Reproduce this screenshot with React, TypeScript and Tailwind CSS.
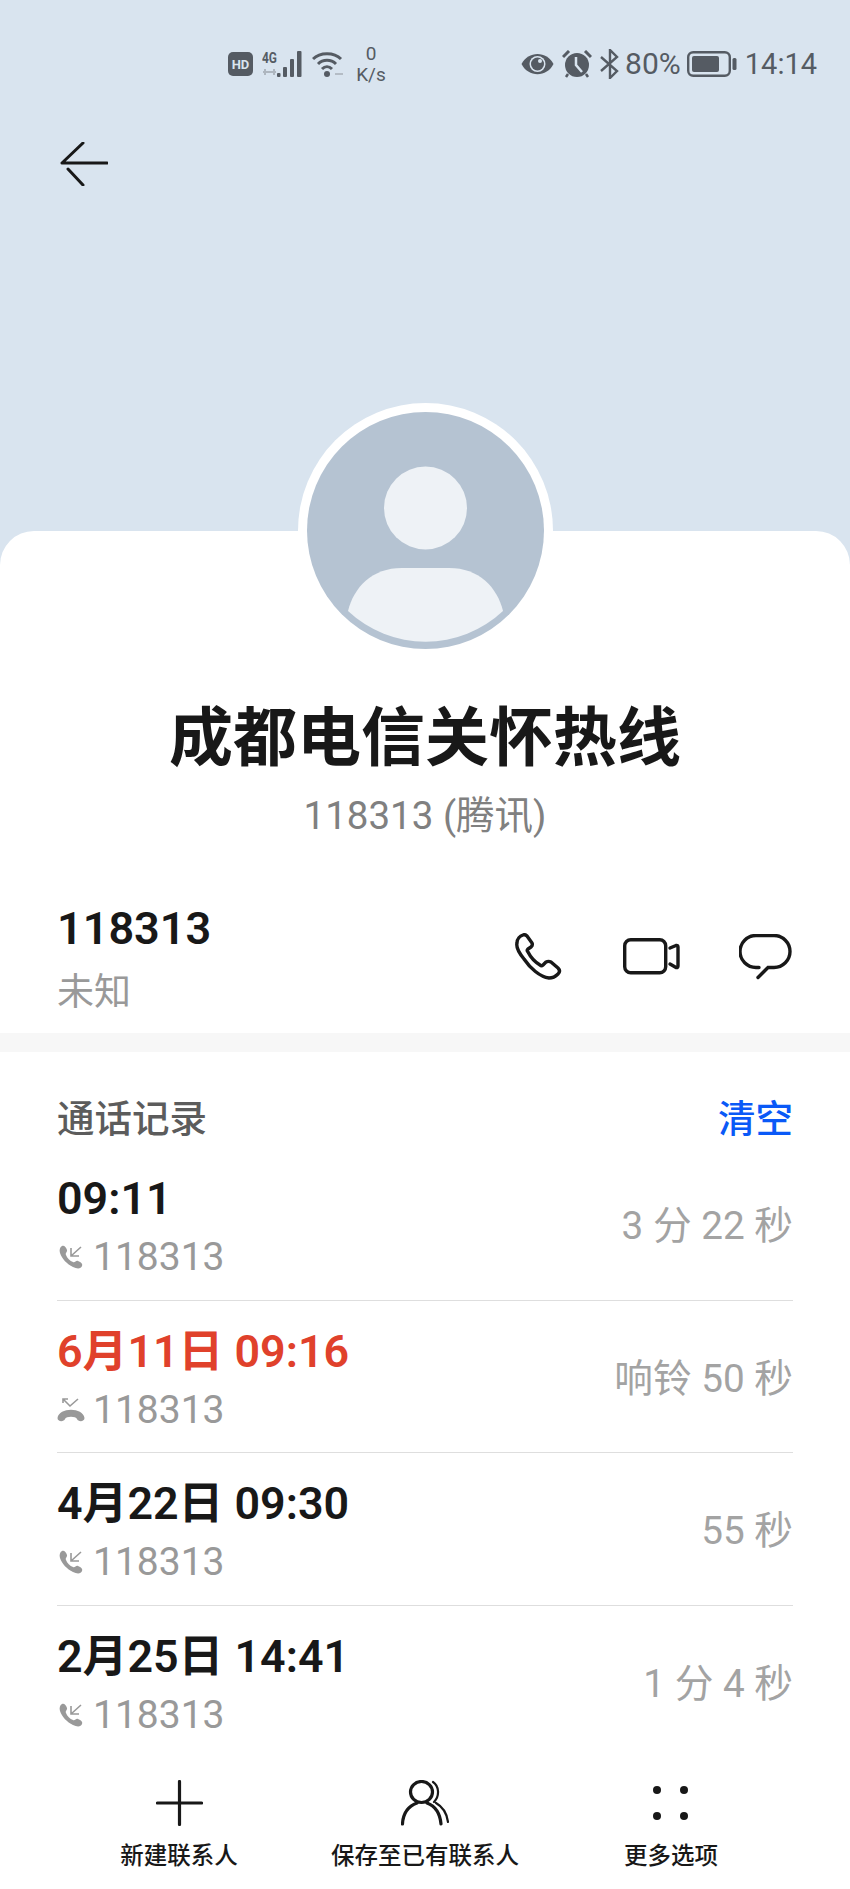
const calls = [
  { time: '09:11', duration: '3 分 22 秒', missed: false },
  { time: '6月11日 09:16', duration: '响铃 50 秒', missed: true },
  { time: '4月22日 09:30', duration: '55 秒', missed: false },
  { time: '2月25日 14:41', duration: '1 分 4 秒', missed: false },
];

function BackIcon() {
  return (
    <svg width="48" height="44" viewBox="0 0 48 44" fill="none" stroke="#181818" strokeWidth="3" strokeLinecap="round">
      <path d="M2 21H47M2 21L23 1M8 27L23 43" />
    </svg>
  );
}

function StatusLeft() {
  return (
    <div className="flex items-center">
      <div className="flex h-[24px] w-[25px] items-center justify-center rounded-[5px] bg-[#555b63] text-[13px] leading-none font-bold text-[#d9e4ef]">
        HD
      </div>
      <svg className="-mt-[6px] ml-[9px]" width="45" height="33" viewBox="0 -6 45 33" fill="none">
        <text x="0" y="12" fontSize="15" fontWeight="700" fill="#555b63" fontFamily="Roboto, sans-serif" textLength="15" lengthAdjust="spacingAndGlyphs">
          4G
        </text>
        <path d="M1 21H14M3 18V24M12 18V24" stroke="#aeb6bf" strokeWidth="2" />
        <g fill="#555b63">
          <rect x="15" y="22" width="3.5" height="4" rx="1" />
          <rect x="21" y="16" width="4" height="10" rx="1" />
          <rect x="28" y="8" width="4" height="18" rx="1" />
          <rect x="35" y="0" width="4.5" height="26" rx="1" />
        </g>
      </svg>
      <svg className="ml-[5px]" width="32" height="27" viewBox="0 0 32 27" fill="none">
        <path d="M1 8C8 1 22 1 29 8M6 13C11 8 19 8 24 13M10 18C13 15 17 15 20 18" stroke="#555b63" strokeWidth="3" />
        <circle cx="15" cy="23" r="3" fill="#555b63" />
        <path d="M23 23H31" stroke="#b4bcc5" strokeWidth="2" />
      </svg>
      <div className="ml-[12px] flex w-[30px] flex-col items-center text-[19px] leading-[21px] text-[#555b63]">
        <span>0</span>
        <span>K/s</span>
      </div>
    </div>
  );
}

function StatusRight() {
  return (
    <div className="flex items-center text-[30px] leading-none text-[#555b63]">
      <svg width="33" height="22" viewBox="0 0 33 22">
        <path d="M0.5 11C7 -2.5 26 -2.5 32.5 11C26 24.500 7 24.500 0.5 11Z" fill="#555b63" />
        <circle cx="16.500" cy="11" r="8" fill="#d9e4ef" />
        <circle cx="16.500" cy="11" r="6.500" fill="#555b63" />
        <circle cx="19" cy="8" r="2" fill="#d9e4ef" />
      </svg>
      <svg className="ml-[8px]" width="30" height="28" viewBox="0 0 30 28">
        <circle cx="15" cy="15" r="12" fill="#555b63" />
        <path d="M1 7L7 1M29 7L23 1" stroke="#555b63" strokeWidth="3" />
        <path d="M6 24L4 27M24 24L26 27" stroke="#555b63" strokeWidth="2.500" />
        <path d="M14 7V15L20 22" stroke="#d9e4ef" strokeWidth="2.500" fill="none" />
      </svg>
      <svg className="ml-[8px]" width="19" height="30" viewBox="0 0 19 30" fill="none" stroke="#555b63" strokeWidth="2.400">
        <path d="M1 8L17 22L10 29V1L17 8L1 22" />
      </svg>
      <span className="ml-[6px]">80%</span>
      <svg className="ml-[6px]" width="50" height="26" viewBox="0 0 50 26" fill="none">
        <rect x="1.200" y="1.200" width="41.600" height="23.600" rx="5" stroke="#555b63" strokeWidth="2.400" />
        <rect x="5" y="5" width="27" height="16" rx="2" fill="#555b63" />
        <rect x="45.500" y="7" width="4" height="12" rx="1.500" fill="#555b63" />
      </svg>
      <span className="ml-[8px] text-[29px]">14:14</span>
    </div>
  );
}

function Avatar() {
  return (
    <div className="mx-auto -mt-[128px] h-[255px] w-[255px] rounded-full bg-white p-[9px]">
      <svg width="237" height="237" viewBox="0 0 237 237">
        <circle cx="118.500" cy="118.500" r="118.500" fill="#b5c3d2" />
        <circle cx="118.500" cy="96" r="41.500" fill="#eef2f6" />
        <path d="M41 199C47 175 65 156 95 156H142C172 156 190 175 196 199A113 113 0 0 1 41 199Z" fill="#eef2f6" />
      </svg>
    </div>
  );
}

function PhoneIcon() {
  return (
    <svg width="48" height="47" viewBox="0 0 48 47" fill="none" stroke="#181818" strokeWidth="3.400" strokeLinejoin="round">
      <path d="M8 2C10 1 11 2 12 3L17 10C18 12 17 13 16 14L13 16C12 17 12 18 13 19C16 25 20 29 25 32C26 33 27 33 28 32L31 29C33 28 34 28 36 29L43 35C45 37 45 39 43 41C40 44 37 45 34 45C25 44 15 35 9 26C4 20 1 14 2 10C2 6 5 3 8 2Z" />
    </svg>
  );
}

function VideoIcon() {
  return (
    <svg width="57" height="37" viewBox="0 0 57 37" fill="none" stroke="#181818" strokeWidth="3.400" strokeLinejoin="round" strokeLinecap="round">
      <rect x="1.700" y="1.700" width="41" height="33" rx="6" />
      <path d="M47 10L53 7.500Q55 7 55 9V28Q55 30 53 29.500L47 26" />
    </svg>
  );
}

function ChatIcon() {
  return (
    <svg width="53" height="46" viewBox="0 0 53 46" fill="none" stroke="#181818" strokeWidth="3.400" strokeLinecap="round">
      <path d="M20 33.500H17A16 16 0 0 1 17 1.500H35A16 16 0 0 1 35 33.500H29L19 43.500" />
    </svg>
  );
}

function CallIcon({ missed }: { missed: boolean }) {
  if (missed) {
    return (
      <svg width="28" height="24" viewBox="0 0 28 24" fill="none">
        <path d="M6 5V1H11M6 1L13 8L21 1" stroke="#999999" strokeWidth="1.600" />
        <path d="M0.5 20C2 9 26 9 27.500 20C27.500 24 21 24 20 21C19 18 9 18 8 21C7 24 0.5 24 0.5 20Z" fill="#999999" />
      </svg>
    );
  }
  return (
    <svg className="ml-[2px]" width="24" height="24" viewBox="0 0 24 24" fill="none">
      <path d="M3 1C5 0 7 2 8 5C8.500 7 6 8 7 10C8 13 11 16 14 17C16 18 17 15 19 16C22 17 24 19 23 21C22 24 18 24 14 22C8 19 3 14 1 8C0 5 1 2 3 1Z" fill="#999999" />
      <path d="M22 2L12 11M12 3V11H20" stroke="#999999" strokeWidth="1.600" />
    </svg>
  );
}

function PlusIcon() {
  return (
    <svg width="47" height="46" viewBox="0 0 47 46" fill="none" stroke="#181818" strokeWidth="3.200" strokeLinecap="round">
      <path d="M23.500 1.500V44.500M1.500 23H45.500" />
    </svg>
  );
}

function PersonIcon() {
  return (
    <svg width="48" height="46" viewBox="0 0 48 46" fill="none" stroke="#181818" strokeWidth="3.200" strokeLinecap="round">
      <ellipse cx="20.500" cy="12" rx="11" ry="10.500" />
      <path d="M1.500 44C2 33 8 26 16 23M26 23C34 26 39 33 40 44" />
      <path d="M32 2C38 6 39 16 33 22M35 23C42 27 46 34 47 42" strokeWidth="2.200" />
    </svg>
  );
}

function DotsIcon() {
  return (
    <svg width="46" height="46" viewBox="0 0 46 46" fill="#181818">
      <circle cx="9" cy="10" r="4" />
      <circle cx="36" cy="10" r="4" />
      <circle cx="9" cy="36" r="4" />
      <circle cx="36" cy="36" r="4" />
    </svg>
  );
}

export default function App() {
  return (
    <div className="flex h-[1889px] w-[850px] flex-col overflow-hidden bg-[#d9e4ef] [font-family:Roboto,'Noto_Sans_CJK_SC',sans-serif] text-[#181818]">
      <div className="flex h-[531px] shrink-0 flex-col">
        <div className="flex items-center justify-between pt-[43px] pr-[33px] pl-[228px]">
          <StatusLeft />
          <StatusRight />
        </div>
        <div className="mt-[57px] pl-[60px]">
          <BackIcon />
        </div>
      </div>

      <div className="flex flex-1 flex-col rounded-t-[34px] bg-white">
        <Avatar />
        <h1 className="mt-[41px] text-center text-[64px] leading-[80px] font-bold">成都电信关怀热线</h1>
        <p className="mt-[12px] text-center text-[38.500px] leading-[50px] text-[#808080]">118313 (腾讯)</p>

        <div className="mt-[63px] flex items-start justify-between pr-[58px] pl-[57px]">
          <div>
            <p className="text-[45px] leading-[50px] font-semibold">118313</p>
            <p className="mt-[14px] text-[37px] leading-[50px] text-[#999999]">未知</p>
          </div>
          <div className="mt-[29px] flex items-center">
            <PhoneIcon />
            <div className="ml-[60px]">
              <VideoIcon />
            </div>
            <div className="ml-[59px]">
              <ChatIcon />
            </div>
          </div>
        </div>

        <div className="mt-[15px] h-[19px] bg-[#f7f7f7]" />

        <div className="mt-[42px] flex items-center justify-between px-[57px] text-[37.500px] leading-[50px] font-medium">
          <span className="text-[#5c5c5c]">通话记录</span>
          <span className="text-[#0a59f7]">清空</span>
        </div>

        <ul className="mt-[4px] px-[57px]">
          {calls.map((call, i) => (
            <li
              key={call.time}
              className={`flex h-[152.500px] items-center justify-between ${
                i < calls.length - 1 ? 'border-b-[1.500px] border-[#dedede]' : ''
              }`}
            >
              <div className="pt-[9px]">
                <p className={`text-[44.800px] leading-[50px] font-semibold ${call.missed ? 'text-[#e0412b]' : ''}`}>
                  {call.time}
                </p>
                <div className="mt-[8px] flex items-center text-[39px] leading-[50px] text-[#999999]">
                  <CallIcon missed={call.missed} />
                  <span className={call.missed ? 'ml-[8px]' : 'ml-[10px]'}>118313</span>
                </div>
              </div>
              <span className="pt-[5px] text-[38.700px] text-[#a3a3a3]">{call.duration}</span>
            </li>
          ))}
        </ul>

        <nav className="mt-auto grid grid-cols-3 px-[56px] pb-[17px] text-[23.500px] leading-[32px] font-medium">
          <div className="flex flex-col items-center">
            <PlusIcon />
            <span className="mt-[14px]">新建联系人</span>
          </div>
          <div className="flex flex-col items-center">
            <PersonIcon />
            <span className="mt-[14px]">保存至已有联系人</span>
          </div>
          <div className="flex flex-col items-center">
            <DotsIcon />
            <span className="mt-[14px]">更多选项</span>
          </div>
        </nav>
      </div>
    </div>
  );
}
